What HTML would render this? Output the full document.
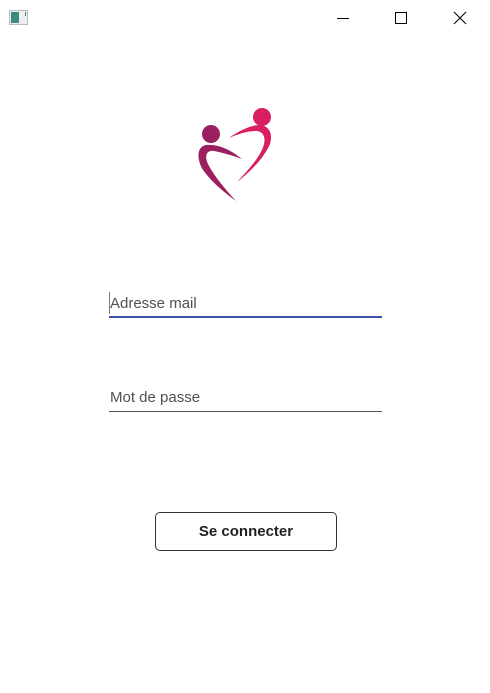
<!DOCTYPE html>
<html><head><meta charset="utf-8"><style>
html,body{margin:0;padding:0;width:490px;height:693px;background:#fff;overflow:hidden;font-family:"Liberation Sans",sans-serif;position:relative}
.a{position:absolute}
.lbl{font-size:15px;color:#505050;left:110px}
</style></head><body>
<svg class="a" style="left:0;top:0" width="490" height="40">
<rect x="9.5" y="10.5" width="18" height="14" fill="#eee" stroke="#bbb"/>
<rect x="11" y="12" width="8" height="11" fill="#3a8a80"/>
<rect x="25" y="12" width="1" height="4" fill="#3a8a80"/>
<line x1="337" y1="18.5" x2="349" y2="18.5" stroke="#000"/>
<rect x="395.5" y="12.5" width="11" height="11" fill="none" stroke="#000"/>
<path d="M454 12L466 24M466 12L454 24" stroke="#000"/>
</svg>
<svg class="a" style="left:180px;top:100px" width="110" height="110">
<circle cx="31" cy="34" r="9" fill="#9a2060"/>
<path d="M26 45 C16 47,17 60,23 70 C34 85,48 95,56 101 C46 90,34 76,28 64 C24 55,27 50,34 51 C44 53,54 56,62 59 C52 51,40 44,26 45Z" fill="#9a2060"/>
<circle cx="82" cy="17" r="9" fill="#d91e62"/>
<path d="M49 38 C60 30,72 25,80 25 C89 26,93 33,90 44 C84 58,70 72,57 82 C70 68,81 56,84 44 C86 36,82 31,76 31 C68 31,58 34,49 38Z" fill="#d91e62"/>
</svg>
<div class="a" style="left:109px;top:292px;width:1px;height:22px;background:#777"></div>
<div class="a lbl" style="top:295px">Adresse mail</div>
<div class="a" style="left:109px;top:316px;width:273px;height:2px;background:#3f51a5"></div>
<div class="a lbl" style="top:389px">Mot de passe</div>
<div class="a" style="left:109px;top:411px;width:273px;height:1px;background:#555"></div>
<div class="a" style="left:155px;top:512px;width:180px;height:37px;border:1px solid #333;border-radius:5px;display:flex;align-items:center;justify-content:center;font-weight:bold;font-size:15px;color:#222">Se connecter</div>
</body></html>
